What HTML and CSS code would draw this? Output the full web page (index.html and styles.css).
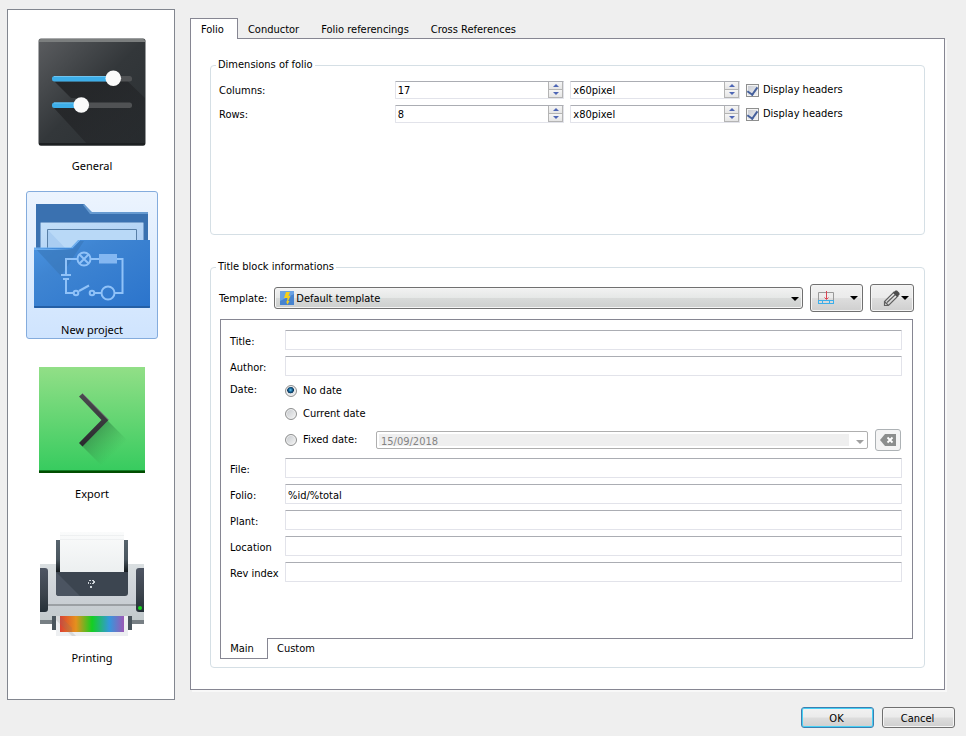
FILE: index.html
```html
<!DOCTYPE html>
<html lang="en">
<head>
<meta charset="utf-8">
<title>Configure</title>
<link rel="stylesheet" href="styles.css">
</head>
<body>
<form class="dialog">
<div class="content">
<nav class="sidebar">
  <a class="page" href="#general">
    <svg viewBox="0 0 128 128" aria-hidden="true">
      <defs>
        <linearGradient id="tile" x1="0" y1="0" x2="1" y2="1"><stop offset="0" stop-color="#5b5d60"/><stop offset=".5" stop-color="#33373a"/><stop offset="1" stop-color="#2b3033"/></linearGradient>
        <linearGradient id="cast" x1="0" y1="0" x2="1" y2="1"><stop offset="0" stop-color="#1e1f21" stop-opacity=".85"/><stop offset="1" stop-color="#222427" stop-opacity=".4"/></linearGradient>
      </defs>
      <rect x="10.5" y="10.5" width="107" height="107" rx="2.5" fill="url(#tile)"/>
      <path d="M26 53H79L85 46L91 45L117 70V117H60L26 80H48L53 77L50 70L43 70Z" fill="url(#cast)"/>
      <path d="M11 14V13Q11 11 13 11H115Q117 11 117 13V14Z" fill="#7b7e7e"/>
      <path d="M11 115H117V116Q117 117.500 115 117.500H13Q11 117.500 11 116Z" fill="#1d2022"/>
      <rect x="24" y="48" width="80" height="5.500" rx="2.500" fill="#505254"/>
      <rect x="24" y="74.500" width="80" height="5.500" rx="2.500" fill="#505254"/>
      <rect x="24" y="48" width="60" height="5.500" rx="2.500" fill="#3daee9"/>
      <rect x="24" y="74.500" width="28" height="5.500" rx="2.500" fill="#3daee9"/>
      <path d="M26 48.500H78M26 75H46" stroke="#6fc4f0"/>
      <circle cx="85.300" cy="50.300" r="7.800" fill="#fafafa"/>
      <circle cx="53.300" cy="77" r="7.800" fill="#fafafa"/>
    </svg>
    <span>General</span>
  </a>
  <a class="page selected" href="#new-project" aria-current="page">
    <svg viewBox="0 0 128 128" aria-hidden="true">
      <defs>
        <linearGradient id="front" x1="0" y1="0" x2="1" y2="1"><stop offset="0" stop-color="#4a94e2"/><stop offset=".3" stop-color="#3f85d2"/><stop offset="1" stop-color="#2b74cc"/></linearGradient>
        <linearGradient id="sheet" x1="0" y1="0" x2="1" y2="1"><stop offset="0" stop-color="#c3dff9"/><stop offset="1" stop-color="#a9cbf2"/></linearGradient>
      </defs>
      <path d="M8 12H56L63 20H120V60H8Z" fill="#3a71b0"/>
      <path d="M56 12L64 20H120V22H62L55 13Z" fill="#669ad0"/>
      <rect x="12.500" y="30.500" width="103" height="32" rx="1" fill="url(#sheet)" stroke="#7aa2cf"/>
      <path d="M19.500 60V37.500H108.500V60" fill="#b9d9f7" stroke="#587fa7"/>
      <path d="M20 38L41 60H20Z" fill="#a9cdf2"/>
      <path d="M6 56H44L52 48H122V116H6Z" fill="url(#front)"/>
      <path d="M8 57H45L52 49H56L33 84Z" fill="#3976b8" opacity=".6"/>
      <path d="M6 56H44L52 48H50L43 55.500H6V58H44" fill="#6badee"/>
      <path d="M6 114H122V115L121 116H7L6 115Z" fill="#245fa6"/>
      <rect x="71" y="62" width="18" height="9.500" fill="#84b7f1"/>
      <g fill="none" stroke="#90c2f8" stroke-width="2">
        <path d="M49 67H38V83M33 83H43M35 87H41M38 87V101H45M51 99L61 93.500M67 101H73M87 101H94.500V67H89M71 67H63"/>
        <circle cx="56" cy="67" r="6.500"/><path d="M51.500 62.500L60.500 71.500M60.500 62.500L51.500 71.500"/>
        <circle cx="48" cy="101" r="2.300"/><circle cx="64" cy="101" r="2.300"/><circle cx="80" cy="101" r="6.500"/>
      </g>
    </svg>
    <span>New project</span>
  </a>
  <a class="page" href="#export">
    <svg viewBox="0 0 128 128" aria-hidden="true">
      <defs>
        <linearGradient id="green" x1="0" y1="0" x2="0" y2="1"><stop offset="0" stop-color="#92df87"/><stop offset="1" stop-color="#35cb5e"/></linearGradient>
        <linearGradient id="drop" gradientUnits="userSpaceOnUse" x1="64" y1="76" x2="86" y2="98"><stop offset="0" stop-color="#37904c" stop-opacity=".8"/><stop offset="1" stop-color="#37a04c" stop-opacity="0"/></linearGradient>
        <linearGradient id="chev" x1="0" y1="0" x2="0" y2="1"><stop offset="0" stop-color="#4b4b4f"/><stop offset="1" stop-color="#29292d"/></linearGradient>
      </defs>
      <rect x="11" y="11" width="106" height="106" fill="url(#green)"/>
      <path d="M79 64L105 90L80 116L54 90Z" fill="url(#drop)"/>
      <path d="M51 40.500L54.500 37.500L80.500 64L54.500 90.500L51 87L73.500 64Z" fill="url(#chev)"/>
      <path d="M54.500 37.500L80.500 64" stroke="#77797b"/>
      <rect x="11" y="114" width="106" height="1" fill="#147d27"/><rect x="11" y="115" width="106" height="2" fill="#004d00"/>
    </svg>
    <span>Export</span>
  </a>
  <a class="page" href="#printing">
    <svg viewBox="0 0 128 128" aria-hidden="true">
      <defs>
        <linearGradient id="shell" x1="0" y1="0" x2="0" y2="1"><stop offset="0" stop-color="#dadfe1"/><stop offset=".6" stop-color="#cbd0d6"/><stop offset="1" stop-color="#c2cacc"/></linearGradient>
        <linearGradient id="dark" x1="0" y1="0" x2="0" y2="1"><stop offset="0" stop-color="#4e5563"/><stop offset=".6" stop-color="#3b434c"/><stop offset="1" stop-color="#253038"/></linearGradient>
        <linearGradient id="post" x1="0" y1="0" x2="0" y2="1"><stop offset="0" stop-color="#57646d"/><stop offset=".6" stop-color="#4a565f"/><stop offset="1" stop-color="#141a1e"/></linearGradient>
        <linearGradient id="sheet2" x1="0" y1="0" x2="0" y2="1"><stop offset="0" stop-color="#fafbfb"/><stop offset="1" stop-color="#eceff0"/></linearGradient>
        <linearGradient id="rainbow"><stop offset="0" stop-color="#dc4232"/><stop offset=".25" stop-color="#e5901e"/><stop offset=".5" stop-color="#14cf22"/><stop offset=".77" stop-color="#3498dc"/><stop offset="1" stop-color="#9b59b6"/></linearGradient>
      </defs>
      <rect x="12" y="44" width="104" height="56" fill="url(#shell)"/>
      <path d="M12 100H24V104H12ZM104 100H116V104H104Z" fill="#777f84"/>
      <rect x="28" y="20" width="72" height="32" fill="url(#post)"/>
      <rect x="32" y="12" width="64" height="40" fill="url(#sheet2)"/>
      <path d="M32 15.500H96M32 19.500H96" stroke="#eef0f1"/>
      <path d="M28 52H100V73Q100 76 97 76H31Q28 76 28 73Z" fill="#3c4550"/>
      <path d="M28 52L52 76H31Q28 76 28 73Z" fill="#4b5461"/>
      <path d="M61 60H63V61H61ZM64 60H66V61H67V63H66V64H64V63H65V61H64ZM60 62H61V64H60ZM62 63H63V64H62ZM62 66H64V68H62Z" fill="#cfd5da"/>
      <path d="M12 48H17Q20 48 20 51V89Q20 92 17 92H12ZM116 48H111Q108 48 108 51V89Q108 92 111 92H116Z" fill="url(#dark)"/>
      <rect x="20" y="84" width="88" height="2" fill="#9ba0a4"/>
      <circle cx="112" cy="88" r="2" fill="#16d61e"/>
      <path d="M24 96H104V110H24Z" fill="#4a555d"/>
      <rect x="28" y="96" width="72" height="20" fill="#edeff1"/>
      <rect x="32" y="96" width="64" height="16" fill="url(#rainbow)"/>
      <path d="M28 96H32L44 108V112L48 116H44L28 100Z" fill="#777" opacity=".18"/>
    </svg>
    <span>Printing</span>
  </a>
</nav>

<main class="settings">
  <div class="tabs" role="tablist">
    <button type="button" role="tab" class="tab active" aria-selected="true">Folio</button>
    <button type="button" role="tab" class="tab">Conductor</button>
    <button type="button" role="tab" class="tab">Folio referencings</button>
    <button type="button" role="tab" class="tab">Cross References</button>
  </div>
  <div class="panel" role="tabpanel">
    <fieldset class="dimensions">
      <legend>Dimensions of folio</legend>
      <div class="sizes">
        <label for="cols">Columns:</label>
        <div class="spin"><input id="cols" type="text" value="17"><div class="steps"><button type="button" class="up" aria-label="Increase"></button><button type="button" class="down" aria-label="Decrease"></button></div></div>
        <div class="spin"><input type="text" value="x60pixel" aria-label="Column width"><div class="steps"><button type="button" class="up" aria-label="Increase"></button><button type="button" class="down" aria-label="Decrease"></button></div></div>
        <label class="check"><input type="checkbox" checked>Display headers</label>
        <label for="rows">Rows:</label>
        <div class="spin"><input id="rows" type="text" value="8"><div class="steps"><button type="button" class="up" aria-label="Increase"></button><button type="button" class="down" aria-label="Decrease"></button></div></div>
        <div class="spin"><input type="text" value="x80pixel" aria-label="Row height"><div class="steps"><button type="button" class="up" aria-label="Increase"></button><button type="button" class="down" aria-label="Decrease"></button></div></div>
        <label class="check"><input type="checkbox" checked>Display headers</label>
      </div>
    </fieldset>

    <fieldset class="titleblock">
      <legend>Title block informations</legend>
      <div class="template">
        <label for="template">Template:</label>
        <div class="combo">
          <select id="template"><option>Default template</option></select>
          <svg class="bolt" viewBox="0 0 14 14" aria-hidden="true"><rect width="14" height="14" fill="#4683cf"/><path d="M0 0H14V3L0 10Z" fill="#6aa2e4"/><path d="M6 1H10L8.500 5H10.500L8 10H9.500L7.500 13.500L6 10.500H7L7.500 7H4Z" fill="#f7cf1b"/></svg>
        </div>
        <button type="button" class="tool insert" aria-label="Title block position">
          <svg width="16" height="14" viewBox="0 0 16 14" aria-hidden="true"><path d="M.5 9V1.500H15.500V9" fill="none" stroke="#999"/><path d="M0 9.500H16M0 12.500H16M.5 9V13M4.500 9V13M11.500 9V13M15.500 9V13" fill="none" stroke="#3daee9"/><path d="M8.500 0V8M6.500 6.500L8.500 8.500L10.500 6.500" fill="none" stroke="#da4453"/></svg>
          <span class="arrow"></span>
        </button>
        <button type="button" class="tool edit" aria-label="Edit template">
          <svg width="17" height="17" viewBox="0 0 17 17" aria-hidden="true"><path d="M1.500 15.500V11.500L11 2L15 6L5.500 15.500ZM1.500 11.500L5.500 15.500M4 12.500L12.500 4.500" fill="none" stroke="#606060" stroke-width="1.200"/><path d="M10 3L12.500 .5H14L16.500 3V4.500L14 7Z" fill="#4d4d4d"/></svg>
          <span class="arrow"></span>
        </button>
      </div>
      <div class="frame">
        <label for="title">Title:</label><input id="title" class="line" type="text">
        <label for="author">Author:</label><input id="author" class="line" type="text">
        <span class="datelabel">Date:</span>
        <div class="dates">
          <label class="radio"><input type="radio" name="date" checked>No date</label>
          <label class="radio"><input type="radio" name="date">Current date</label>
          <div class="fixed">
            <label class="radio"><input type="radio" name="date">Fixed date:</label>
            <div class="datebox"><select disabled aria-label="Fixed date"><option>15/09/2018</option></select></div>
            <button type="button" class="clear" disabled aria-label="Clear date"><svg width="16" height="12" viewBox="0 0 16 12" aria-hidden="true"><path d="M5 0H16V12H5L0 6Z" fill="#8c8e8d"/><path d="M7.500 3.500L12.500 8.500M12.500 3.500L7.500 8.500" stroke="#fff" stroke-width="1.800"/></svg></button>
          </div>
        </div>
        <label for="file">File:</label><input id="file" class="line" type="text">
        <label for="folio">Folio:</label><input id="folio" class="line" type="text" value="%id/%total">
        <label for="plant">Plant:</label><input id="plant" class="line" type="text">
        <label for="location">Location</label><input id="location" class="line" type="text">
        <label for="rev">Rev index</label><input id="rev" class="line" type="text">
      </div>
      <div class="subtabs" role="tablist">
        <button type="button" role="tab" class="subtab active" aria-selected="true">Main</button>
        <button type="button" role="tab" class="subtab">Custom</button>
      </div>
    </fieldset>
  </div>
</main>
</div>
<footer>
  <button type="submit" class="push default">OK</button>
  <button type="button" class="push">Cancel</button>
</footer>
</form>
</body>
</html>
```
FILE: styles.css
```css
* { box-sizing: border-box; }

body {
  margin: 0;
  background: #efefef;
  color: #000;
  font: 11px/16px "DejaVu Sans Condensed", "Open Sans", sans-serif;
}

button, input, select { font: inherit; color: inherit; margin: 0; }

.dialog {
  display: flex;
  flex-direction: column;
  gap: 7px;
  min-height: 100vh;
  padding: 9px 11px 8px 7px;
}

.content { display: flex; flex: 1; gap: 15px; }

/* Page list */
.sidebar {
  flex: none;
  display: flex;
  flex-direction: column;
  align-items: center;
  gap: 16px;
  padding: 17px 16px 17px 18px;
  border: 1px solid #82868f;
  background: #fff;
}

.page {
  display: flex;
  flex-direction: column;
  align-items: center;
  width: 132px;
  height: 148px;
  border: 1px solid transparent;
  border-radius: 3px;
  color: #000;
  font: 11px/20px "Noto Sans", sans-serif;
  text-decoration: none;
}

.page svg { flex: none; width: 128px; height: 128px; }

.selected {
  border-color: #84acdd;
  background: linear-gradient(#ecf4fe, #cfe4fe);
}

/* Settings tabs */
.settings {
  display: flex;
  flex: 1;
  flex-direction: column;
  min-width: 0;
  margin: 9px 10px 10px 0;
}

.tabs { display: flex; align-items: flex-end; }

.tab {
  height: 18px;
  padding: 2px 12px 0 10px;
  border: 0;
  background: none;
}

.tab.active {
  position: relative;
  height: 21px;
  margin-bottom: -1px;
  padding: 1px 13px 0 10px;
  border: 1px solid #868692;
  border-bottom: 0;
  background: #fff;
}

.panel {
  display: flex;
  flex: 1;
  flex-direction: column;
  gap: 24px;
  padding: 18px 19px 21px;
  border: 1px solid #868692;
  background: #fff;
  box-shadow: 2px 2px 0 #f8f8f8;
}

fieldset {
  min-width: 0;
  margin: 0;
  padding: 0 10px 8px 8px;
  border: 1px solid #d5dfe5;
  border-radius: 4px;
}

legend { margin-left: -3px; padding: 0 2px; }

.dimensions { min-height: 178px; }

.titleblock { flex: 1; }

.sizes {
  display: grid;
  grid-template-columns: 1fr 1fr 1fr 168px;
  gap: 6px;
  padding-top: 8px;
}

.sizes > label { height: 18px; line-height: 20px; }

.spin {
  display: flex;
  min-width: 0;
  height: 18px;
  border: 1px solid #e2e3ea;
  border-top-color: #abadb3;
  border-radius: 1px;
}

.spin input {
  flex: 1;
  min-width: 0;
  padding: 2px 0 0 2px;
  border: 0;
  background: none;
}

.steps { display: flex; flex-direction: column; width: 15px; }

.steps button {
  display: grid;
  place-items: center;
  flex: 1;
  padding: 0;
  border: 1px solid #b4b4b4;
  border-top: 0;
  background: linear-gradient(#f6f6f6, #e5e5e5);
}

.steps button::before {
  content: "";
  border: 3px solid transparent;
}

.steps .up::before { border-top: 0; border-bottom-color: #4e66b5; }
.steps .down::before { border-bottom: 0; border-top-color: #4e66b5; }

.check { display: flex; align-items: center; gap: 4px; }

.check input {
  display: grid;
  place-items: center;
  width: 13px;
  height: 13px;
  appearance: none;
  border: 1px solid #8e8f8f;
  background: linear-gradient(135deg, #c6cad2, #f4f4f4);
  box-shadow: inset 0 0 0 1px #f4f4f4;
}

.check input:checked::before {
  content: "";
  width: 5px;
  height: 8px;
  margin-bottom: 3px;
  border: solid #45609c;
  border-width: 0 2px 2px 0;
  transform: rotate(35deg);
}

/* Template row */
.template { display: flex; align-items: center; gap: 7px; padding-top: 9px; }

.template label { padding-top: 2px; }

.combo { position: relative; flex: 1; }

.combo select {
  display: block;
  width: 100%;
  height: 22px;
  padding: 2px 20px 0 21px;
  appearance: none;
  border: 1px solid #707070;
  border-radius: 3px;
  background: linear-gradient(#f2f2f2, #e6e8e7 48%, #d8dad9 52%, #cdcfce);
  box-shadow: inset 0 0 0 1px #f5f5f5;
}

.bolt { position: absolute; left: 6px; top: 4px; width: 14px; height: 14px; }

.combo::after, .arrow {
  border: 4px solid transparent;
  border-top-color: #000;
  border-bottom: 0;
}

.combo::after { content: ""; position: absolute; right: 4px; top: 10px; }

.tool {
  display: flex;
  align-items: center;
  height: 28px;
  padding: 0 4px 0 7px;
  border: 1px solid #707070;
  border-radius: 3px;
  background: linear-gradient(#f2f2f2, #ebebeb 48%, #dddddd 52%, #cfcfcf);
  box-shadow: inset 0 0 0 1px #f5f5f5;
}

.insert { justify-content: space-between; width: 53px; }
.edit { justify-content: flex-end; gap: 1px; width: 44px; }

/* Title block fields */
.frame {
  display: grid;
  grid-template-columns: 49px 1fr;
  gap: 6px;
  min-height: 320px;
  align-content: start;
  margin: 7px 1px 0;
  padding: 10px 10px 10px 9px;
  border: 1px solid #868692;
}

.frame > label { line-height: 24px; white-space: nowrap; height: 20px; }

.line {
  width: 100%;
  height: 20px;
  padding: 2px 2px 0;
  border: 1px solid #e2e3ea;
  border-top-color: #abadb3;
  border-radius: 1px;
}

.dates { display: flex; flex-direction: column; gap: 5px; }

.radio { display: flex; align-items: center; gap: 6px; height: 18px; }

.radio input {
  width: 12px;
  height: 12px;
  appearance: none;
  border: 1px solid #8e8f8f;
  border-radius: 50%;
  background: linear-gradient(135deg, #c4c8cc, #f6f6f6);
  box-shadow: inset 0 0 0 1px #f0f0f0;
}

.radio input:checked {
  background: radial-gradient(circle at 45% 40%, #6fc8ef 0, #1b6fa3 20%, #0b3357 38%, #e4e6e8 45%);
}

.fixed { display: flex; align-items: center; height: 24px; padding-right: 1px; }
.fixed .radio { width: 91px; }

.datebox { position: relative; flex: 1; margin-right: 7px; }

.datebox select {
  display: block;
  width: 100%;
  height: 18px;
  padding: 2px 18px 0 4px;
  appearance: none;
  border: 1px solid #afafaf;
  border-radius: 2px;
  background: linear-gradient(#efefef, #efefef) 2px 2px / calc(100% - 20px) calc(100% - 4px) no-repeat #fff;
  color: #838383;
  opacity: 1;
}

.datebox::after {
  content: "";
  position: absolute;
  right: 4px;
  top: 9px;
  border: 4px solid transparent;
  border-top-color: #a0a0a0;
  border-bottom: 0;
}

.clear {
  display: grid;
  place-items: center;
  width: 26px;
  height: 22px;
  padding: 0;
  border: 1px solid #adb2b5;
  border-radius: 3px;
  background: #f4f4f4;
}

.subtabs { display: flex; margin-left: 1px; }

.subtab {
  height: 18px;
  padding: 2px 9px 0;
  border: 0;
  background: none;
}

.subtab.active {
  position: relative;
  width: 48px;
  height: 21px;
  margin-top: -1px;
  padding: 2px 4px 0 0;
  border: 1px solid #868692;
  border-top: 0;
  background: #fff;
}

/* Dialog buttons */
footer { display: flex; justify-content: flex-end; gap: 8px; }

.push {
  width: 73px;
  height: 21px;
  padding: 2px 2px 0 0;
  border: 1px solid #707070;
  border-radius: 3px;
  background: linear-gradient(#f2f2f2, #ebebeb 48%, #dddddd 52%, #cfcfcf);
  box-shadow: inset 0 0 0 1px #f5f5f5;
}

.default { border-color: #3c7fb1; box-shadow: inset 0 0 0 1px #46d0f5; }
```
